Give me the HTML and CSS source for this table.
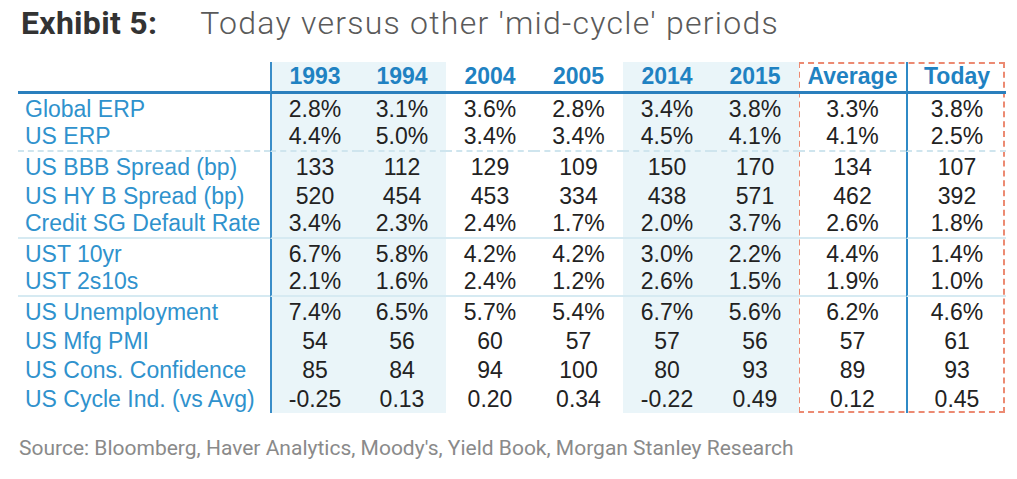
FILE: index.html
```html
<!DOCTYPE html>
<html lang="en">
<head>
<meta charset="utf-8">
<title>Exhibit 5</title>
<link rel="stylesheet" href="styles.css">
</head>
<body>
<div class="page">
  <h1 class="title"><span class="title-bold">Exhibit 5:</span><span class="title-light">Today versus other 'mid-cycle' periods</span></h1>
  <div class="table-wrap">
    <div class="highlight"></div>
    <table class="data">
      <colgroup>
        <col class="c-label">
        <col class="c-yr sh">
        <col class="c-yr sh">
        <col class="c-yr">
        <col class="c-yr2">
        <col class="c-yr sh">
        <col class="c-yr sh">
        <col class="c-avg">
        <col class="c-today">
      </colgroup>
      <thead>
        <tr>
          <th class="label"></th>
          <th class="first">1993</th><th>1994</th><th>2004</th><th>2005</th><th>2014</th><th>2015</th><th>Average</th><th class="today">Today</th>
        </tr>
      </thead>
      <tbody>
        <tr><td class="label">Global ERP</td><td class="first">2.8%</td><td>3.1%</td><td>3.6%</td><td>2.8%</td><td>3.4%</td><td>3.8%</td><td>3.3%</td><td class="today">3.8%</td></tr>
        <tr class="sep-dash"><td class="label">US ERP</td><td class="first">4.4%</td><td>5.0%</td><td>3.4%</td><td>3.4%</td><td>4.5%</td><td>4.1%</td><td>4.1%</td><td class="today">2.5%</td></tr>
        <tr><td class="label">US BBB Spread (bp)</td><td class="first">133</td><td>112</td><td>129</td><td>109</td><td>150</td><td>170</td><td>134</td><td class="today">107</td></tr>
        <tr><td class="label">US HY B Spread (bp)</td><td class="first">520</td><td>454</td><td>453</td><td>334</td><td>438</td><td>571</td><td>462</td><td class="today">392</td></tr>
        <tr class="sep"><td class="label">Credit SG Default Rate</td><td class="first">3.4%</td><td>2.3%</td><td>2.4%</td><td>1.7%</td><td>2.0%</td><td>3.7%</td><td>2.6%</td><td class="today">1.8%</td></tr>
        <tr><td class="label">UST 10yr</td><td class="first">6.7%</td><td>5.8%</td><td>4.2%</td><td>4.2%</td><td>3.0%</td><td>2.2%</td><td>4.4%</td><td class="today">1.4%</td></tr>
        <tr class="sep"><td class="label">UST 2s10s</td><td class="first">2.1%</td><td>1.6%</td><td>2.4%</td><td>1.2%</td><td>2.6%</td><td>1.5%</td><td>1.9%</td><td class="today">1.0%</td></tr>
        <tr><td class="label">US Unemployment</td><td class="first">7.4%</td><td>6.5%</td><td>5.7%</td><td>5.4%</td><td>6.7%</td><td>5.6%</td><td>6.2%</td><td class="today">4.6%</td></tr>
        <tr><td class="label">US Mfg PMI</td><td class="first">54</td><td>56</td><td>60</td><td>57</td><td>57</td><td>56</td><td>57</td><td class="today">61</td></tr>
        <tr><td class="label">US Cons. Confidence</td><td class="first">85</td><td>84</td><td>94</td><td>100</td><td>80</td><td>93</td><td>89</td><td class="today">93</td></tr>
        <tr><td class="label">US Cycle Ind. (vs Avg)</td><td class="first">-0.25</td><td>0.13</td><td>0.20</td><td>0.34</td><td>-0.22</td><td>0.49</td><td>0.12</td><td class="today">0.45</td></tr>
      </tbody>
    </table>
  </div>
  <p class="source">Source: Bloomberg, Haver Analytics, Moody's, Yield Book, Morgan Stanley Research</p>
</div>
</body>
</html>
```

FILE: styles.css
```css
html, body {
  margin: 0;
  padding: 0;
  background: #ffffff;
}

.page {
  width: 1017px;
  height: 479px;
  overflow: hidden;
}

.title {
  margin: 4px 0 0 21px;
  height: 38px;
  font-family: Roboto, "Liberation Sans", sans-serif;
  font-size: 32px;
  line-height: 38px;
  font-weight: normal;
  white-space: nowrap;
}

.title-bold {
  font-weight: 700;
  color: #333333;
  letter-spacing: 0.3px;
  margin-right: 43px;
}

.title-light {
  font-weight: 300;
  color: #5a5a5a;
  letter-spacing: 1.25px;
}

.table-wrap {
  position: relative;
  width: 987px;
  margin: 20px 0 0 18px;
}

.data {
  position: relative;
  z-index: 1;
  width: 987px;
  table-layout: fixed;
  border-collapse: separate;
  border-spacing: 0;
  font-family: "Liberation Sans", Arial, sans-serif;
  font-size: 23px;
}

.c-label { width: 252px; }
.c-yr { width: 88px; }
.c-yr2 { width: 89px; }
.c-avg { width: 107px; }
.c-today { width: 100px; }
.sh { background: #eaf5f9; }

.data th,
.data td {
  padding: 0;
  text-align: center;
  white-space: nowrap;
  overflow: visible;
}

.data th {
  height: 29px;
  line-height: 29px;
  color: #1f82c2;
  font-weight: 700;
  border-bottom: 3px solid #2a7fbd;
}

.data td {
  height: 29px;
  line-height: 28px;
  color: #222222;
}

.data td.label {
  text-align: left;
  padding-left: 7px;
  color: #2f92cd;
}

.data .first {
  border-left: 2px solid #3a8dc8;
}

.data .today {
  border-left: 2px solid #2f8ac6;
}

.data tr.sep-dash td {
  height: 27px;
  line-height: 27px;
  border-bottom: 2px dashed #cfe5ee;
}

.data tr.sep td {
  height: 27px;
  line-height: 27px;
  border-bottom: 2px solid #d6eaf2;
}

.highlight {
  position: absolute;
  z-index: 0;
  left: 780px;
  top: 0;
  width: 207px;
  height: 351px;
  box-sizing: border-box;
  border: 2px dashed #ec8a72;
  pointer-events: none;
}

.source {
  margin: 23px 0 0 19px;
  font-family: Roboto, "Liberation Sans", sans-serif;
  font-size: 21px;
  line-height: 24px;
  color: #8a8a8a;
  white-space: nowrap;
}
```
